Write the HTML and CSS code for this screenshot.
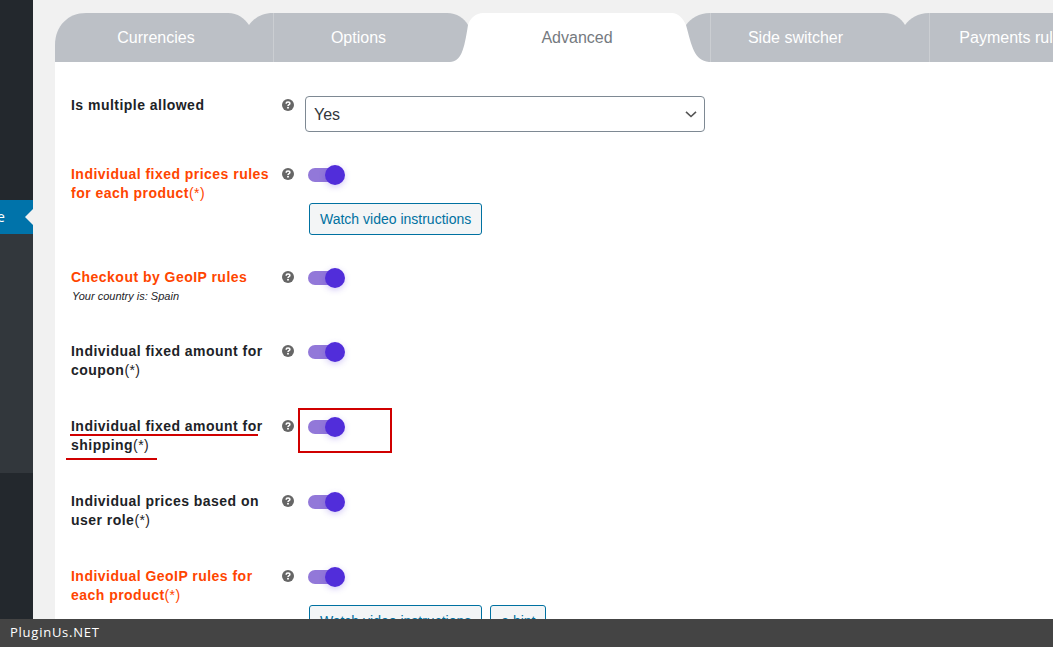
FILE: index.html
```html
<!DOCTYPE html>
<html lang="en">
<head>
<meta charset="utf-8">
<title>Advanced options</title>
<link rel="stylesheet" href="styles.css">
</head>
<body>
<div class="page">
  <aside class="sidebar">
    <div class="side-top"></div>
    <div class="side-active"><span class="side-letter">e</span><span class="side-arrow"></span></div>
    <div class="side-sub"></div>
    <div class="side-rest"></div>
  </aside>
  <main class="main">
    <nav class="tabs">
      <a class="tab tab-first">
        <svg class="tab-bg" width="194" height="49" viewBox="0 0 194 49"><path d="M0 49V32C0 13 13 0 31 0H173C183 0 189 5 194 12V49Z"/></svg>
        <span class="tab-label">Currencies</span>
      </a>
      <a class="tab">
        <svg class="tab-bg" width="219" height="49" viewBox="0 0 219 49"><path d="M0 12C5 5 13 0 24 0H198C208 0 215 5 219 12V49H0Z"/></svg>
        <i class="tab-sep"></i>
        <span class="tab-label">Options</span>
      </a>
      <a class="tab tab-active">
        <svg class="tab-bg" width="218" height="49" viewBox="0 0 218 49"><path d="M-18 49C-7 48 -4 38 0 12C2 5 8 0 15 0H204C210 0 215 5 218 12C224 34 226 47 241 49Z"/></svg>
        <span class="tab-label">Advanced</span>
      </a>
      <a class="tab">
        <svg class="tab-bg" width="219" height="49" viewBox="0 0 219 49"><path d="M0 12C5 5 13 0 24 0H198C208 0 215 5 219 12V49H0Z"/></svg>
        <i class="tab-sep"></i>
        <span class="tab-label">Side switcher</span>
      </a>
      <a class="tab">
        <svg class="tab-bg" width="219" height="49" viewBox="0 0 219 49"><path d="M0 12C5 5 13 0 24 0H198C208 0 215 5 219 12V49H0Z"/></svg>
        <i class="tab-sep"></i>
        <span class="tab-label">Payments rules</span>
      </a>
    </nav>
    <section class="panel">
      <div class="row">
        <div class="label">Is multiple allowed</div>
        <svg class="help" width="12" height="12" viewBox="0 0 12 12"><circle cx="6" cy="6" r="6"/><path d="M4.2 4.7C4.2 3.6 5 3 6 3C7 3 7.9 3.6 7.9 4.5C7.9 5.7 6 5.7 6 7" /><rect x="5.1" y="7.9" width="1.8" height="1.6"/></svg>
        <div class="control">
          <select class="select"><option>Yes</option></select>
        </div>
      </div>
      <div class="row">
        <div class="label label-hot">Individual fixed prices rules for each product<span class="star">(*)</span></div>
        <svg class="help" width="12" height="12" viewBox="0 0 12 12"><circle cx="6" cy="6" r="6"/><path d="M4.2 4.7C4.2 3.6 5 3 6 3C7 3 7.9 3.6 7.9 4.5C7.9 5.7 6 5.7 6 7" /><rect x="5.1" y="7.9" width="1.8" height="1.6"/></svg>
        <div class="control">
          <span class="toggle"><span class="knob"></span></span>
          <div class="buttons"><a class="btn">Watch video instructions</a></div>
        </div>
      </div>
      <div class="row">
        <div class="label label-hot">Checkout by GeoIP rules<small class="note">Your country is: Spain</small></div>
        <svg class="help" width="12" height="12" viewBox="0 0 12 12"><circle cx="6" cy="6" r="6"/><path d="M4.2 4.7C4.2 3.6 5 3 6 3C7 3 7.9 3.6 7.9 4.5C7.9 5.7 6 5.7 6 7" /><rect x="5.1" y="7.9" width="1.8" height="1.6"/></svg>
        <div class="control"><span class="toggle"><span class="knob"></span></span></div>
      </div>
      <div class="row">
        <div class="label">Individual fixed amount for coupon<span class="star">(*)</span></div>
        <svg class="help" width="12" height="12" viewBox="0 0 12 12"><circle cx="6" cy="6" r="6"/><path d="M4.2 4.7C4.2 3.6 5 3 6 3C7 3 7.9 3.6 7.9 4.5C7.9 5.7 6 5.7 6 7" /><rect x="5.1" y="7.9" width="1.8" height="1.6"/></svg>
        <div class="control"><span class="toggle"><span class="knob"></span></span></div>
      </div>
      <div class="row row-marked">
        <div class="label">Individual fixed amount for shipping<span class="star">(*)</span></div>
        <svg class="help" width="12" height="12" viewBox="0 0 12 12"><circle cx="6" cy="6" r="6"/><path d="M4.2 4.7C4.2 3.6 5 3 6 3C7 3 7.9 3.6 7.9 4.5C7.9 5.7 6 5.7 6 7" /><rect x="5.1" y="7.9" width="1.8" height="1.6"/></svg>
        <div class="control"><span class="toggle"><span class="knob"></span></span></div>
        <i class="mark-line mark-line-1"></i>
        <i class="mark-line mark-line-2"></i>
        <i class="mark-box"></i>
      </div>
      <div class="row">
        <div class="label">Individual prices based on user role<span class="star">(*)</span></div>
        <svg class="help" width="12" height="12" viewBox="0 0 12 12"><circle cx="6" cy="6" r="6"/><path d="M4.2 4.7C4.2 3.6 5 3 6 3C7 3 7.9 3.6 7.9 4.5C7.9 5.7 6 5.7 6 7" /><rect x="5.1" y="7.9" width="1.8" height="1.6"/></svg>
        <div class="control"><span class="toggle"><span class="knob"></span></span></div>
      </div>
      <div class="row">
        <div class="label label-hot">Individual GeoIP rules for each product<span class="star">(*)</span></div>
        <svg class="help" width="12" height="12" viewBox="0 0 12 12"><circle cx="6" cy="6" r="6"/><path d="M4.2 4.7C4.2 3.6 5 3 6 3C7 3 7.9 3.6 7.9 4.5C7.9 5.7 6 5.7 6 7" /><rect x="5.1" y="7.9" width="1.8" height="1.6"/></svg>
        <div class="control">
          <span class="toggle"><span class="knob"></span></span>
          <div class="buttons"><a class="btn">Watch video instructions</a><a class="btn">a hint</a></div>
        </div>
      </div>
    </section>
  </main>
</div>
<footer class="footer">PluginUs.NET</footer>
</body>
</html>
```
FILE: styles.css
```css
* { box-sizing: border-box; }
html, body { margin: 0; height: 100%; overflow: hidden; }
body { font-family: "Liberation Sans", Arial, sans-serif; background: #f1f1f1; }

.page { display: flex; height: 647px; overflow: hidden; }

.sidebar { flex: 0 0 33px; display: flex; flex-direction: column; background: #23282d; }
.side-top { flex: 0 0 200px; }
.side-active { flex: 0 0 34px; background: #0073aa; display: flex; align-items: center; justify-content: space-between; color: #fff; font: 14px/1 "Open Sans", sans-serif; overflow: hidden; }
.side-letter { margin-left: -3px; }
.side-arrow { width: 0; height: 0; border: 8px solid transparent; border-right-color: #f1f1f1; border-left-width: 0; }
.side-sub { flex: 0 0 239px; background: #32373c; }
.side-rest { flex: 1; }

.main { flex: 1; min-width: 0; padding: 13px 0 0 22px; display: flex; flex-direction: column; }

.tabs { display: flex; height: 49px; flex: 0 0 49px; }
.tab { position: relative; flex: 0 0 219px; height: 49px; display: flex; align-items: center; justify-content: center; font-size: 16px; color: #fff; }
.tab-first { flex-basis: 194px; padding-left: 8px; }
.tab-bg { position: absolute; left: 0; top: 0; overflow: visible; fill: #bcc0c6; }
.tab-label { position: relative; white-space: nowrap; }
.tab-sep { position: absolute; left: 24px; top: 0; bottom: 0; width: 1px; background: #cbced2; }
.tab-active { flex-basis: 218px; z-index: 1; color: #757a80; }
.tab-active .tab-bg { fill: #fff; }

.panel { flex: 1; background: #fff; padding: 34px 0 0 16px; display: flex; flex-direction: column; gap: 33px; width: 998px; }

.row { position: relative; display: flex; align-items: flex-start; }
.label { flex: 0 0 201px; padding-bottom: 4px; font-size: 14px; line-height: 19px; font-weight: 700; letter-spacing: .47px; color: #1d2327; }
.label-hot { color: #ff4500; }
.star { font-weight: 400; letter-spacing: .4px; }
.note { display: block; font-size: 11px; line-height: 18px; font-weight: 400; font-style: italic; letter-spacing: 0; padding-left: 1px; color: #1d2327; }

.help { flex: 0 0 12px; margin: 3px 0 0 10px; fill: #666; stroke: none; }
.help path { fill: none; stroke: #fff; stroke-width: 1.5; }
.help rect { fill: #fff; }

.control { margin-left: 11px; padding-left: 0; display: flex; flex-direction: column; align-items: flex-start; }

.select { appearance: none; width: 400px; height: 36px; margin: 0; padding: 0 24px 0 8px; border: 1px solid #7e8993; border-radius: 4px; font: 16px "Liberation Sans", Arial, sans-serif; color: #32373c; background: #fff url("data:image/svg+xml,%3Csvg xmlns='http://www.w3.org/2000/svg' width='12' height='8' viewBox='0 0 12 8'%3E%3Cpath d='M1 1.8l5 4.7 5-4.7' fill='none' stroke='%23555' stroke-width='1.6'/%3E%3C/svg%3E") no-repeat right 7px center; }

.toggle { position: relative; display: block; width: 37px; height: 20px; margin-left: 3px; }
.toggle::before { content: ""; position: absolute; left: 0; top: 3px; width: 34px; height: 14px; border-radius: 7px; background: #9278d9; }
.knob { position: absolute; left: 17px; top: 0; width: 20px; height: 20px; border-radius: 50%; background: #512dda; box-shadow: 0 2px 6px rgba(81,45,218,.25); }

.buttons { display: flex; gap: 8px; margin: 18px 0 0 4px; }
.btn { display: block; height: 32px; padding: 0 10px; border: 1px solid #0071a1; border-radius: 3px; background: #f3f5f6; color: #0071a1; font-size: 14px; line-height: 30px; white-space: nowrap; }

.mark-line { position: absolute; height: 2px; background: #d00000; }
.mark-line-1 { left: -1px; top: 17px; width: 188px; }
.mark-line-2 { left: -5px; top: 41px; width: 91px; }
.mark-box { position: absolute; left: 227px; top: -9px; width: 94px; height: 45px; border: 2px solid #d00000; }

.footer { position: absolute; left: 0; right: 0; bottom: 0; height: 28px; padding-left: 10px; background: #444; color: #fff; font: 13px/27px "Open Sans", sans-serif; letter-spacing: .75px; }
```
